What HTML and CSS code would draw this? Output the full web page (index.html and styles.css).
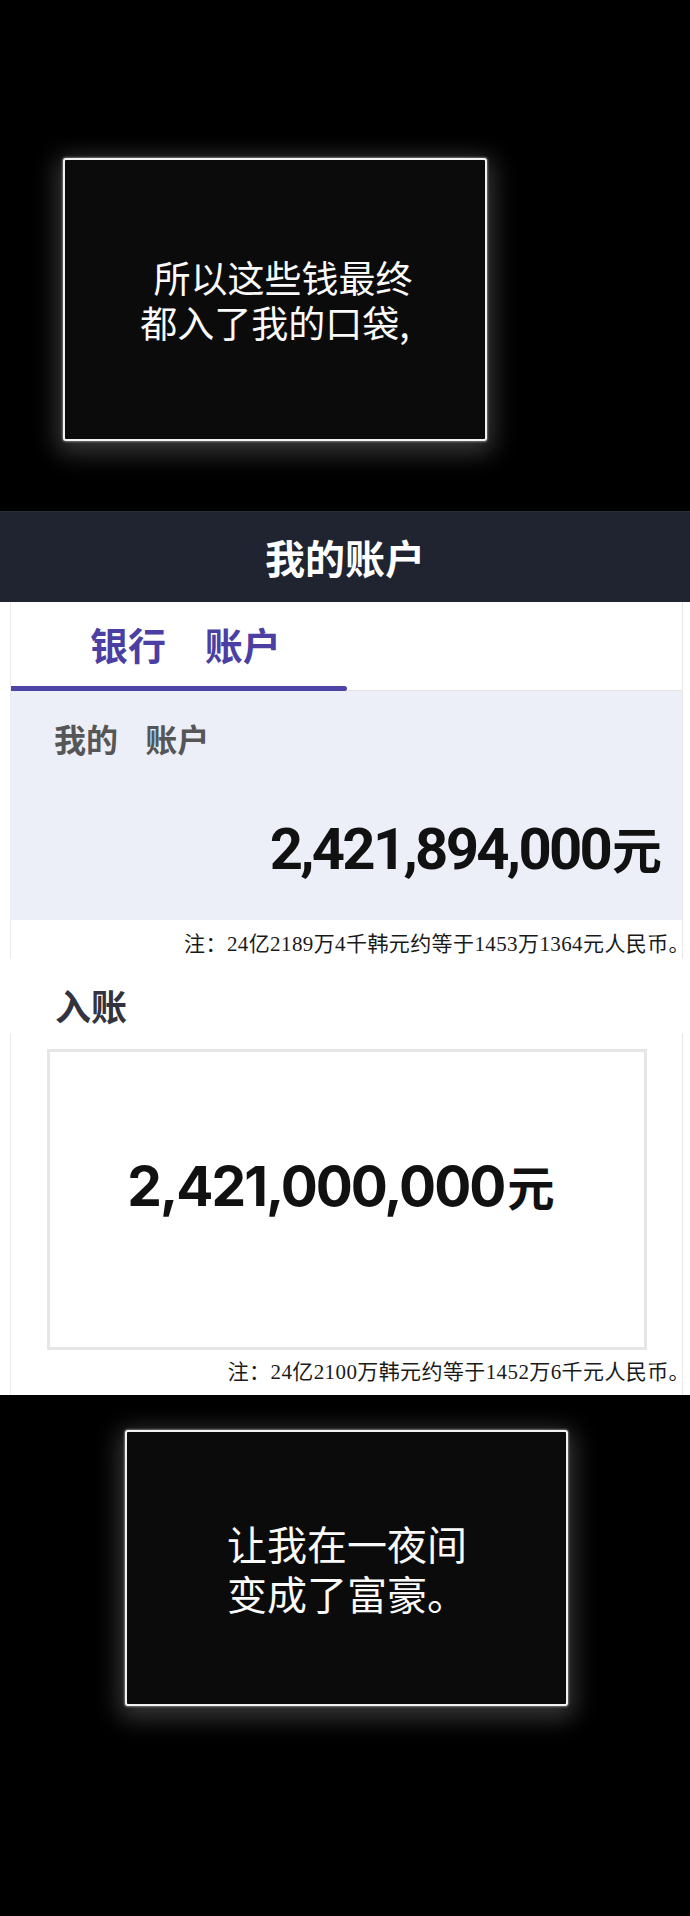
FILE: index.html
```html
<!DOCTYPE html>
<html lang="zh-CN">
<head>
<meta charset="utf-8">
<title>我的账户</title>
<link rel="stylesheet" href="styles.css">
</head>
<body>
  <section class="scene scene-top">
    <div class="caption caption-first">
      <p class="caption-text">所以这些钱最终<br>都入了我的口袋,</p>
    </div>
  </section>

  <main class="bank">
    <header class="bank-bar">
      <h1 class="bank-title">我的账户</h1>
    </header>

    <div class="sheet sheet-account">
      <nav class="tabs">
        <span class="tab active">银行 账户</span>
      </nav>
      <div class="balance">
        <div class="balance-label">我的 账户</div>
        <div class="balance-amount">2,421,894,000<span class="unit">元</span></div>
      </div>
      <p class="note">注：24亿2189万4千韩元约等于1453万1364元人民币。</p>
    </div>

    <h2 class="section-title">入账</h2>

    <div class="sheet sheet-deposit">
      <div class="deposit-box">
        <div class="deposit-amount">2,421,000,000<span class="unit">元</span></div>
      </div>
      <p class="note">注：24亿2100万韩元约等于1452万6千元人民币。</p>
    </div>
  </main>

  <section class="scene scene-bottom">
    <div class="caption caption-second">
      <p class="caption-text">让我在一夜间<br>变成了富豪。</p>
    </div>
  </section>
</body>
</html>
```

FILE: styles.css
```css
* {
  box-sizing: border-box;
}

html,
body {
  margin: 0;
  padding: 0;
  background: #000;
}

body {
  width: 690px;
  font-family: "Noto Sans CJK SC", "Noto Sans", sans-serif;
}

p {
  margin: 0;
}

/* ---------- black narration panels ---------- */

.scene {
  background: #000;
}

.scene-top {
  height: 511px;
  padding: 158px 0 0 63px;
}

.scene-bottom {
  height: 521px;
  padding: 35px 0 0 125px;
}

.caption {
  display: flex;
  flex-direction: column;
  justify-content: center;
  align-items: center;
  background: #0b0b0b;
  border: 2px solid #f2f2f2;
  border-radius: 3px;
  color: #fafafa;
  font-family: "Noto Sans CJK SC", sans-serif;
  font-weight: 400;
  box-shadow: 0 0 2px 1px rgba(255, 255, 255, 0.35),
              0 6px 24px 6px rgba(200, 200, 200, 0.28);
}

.caption-first {
  width: 424px;
  height: 283px;
  font-size: 37px;
  line-height: 45px;
}

.caption-first .caption-text {
  width: 100%;
  text-align: center;
  text-indent: 16px;
}

.caption-second {
  width: 443px;
  height: 276px;
  font-size: 40px;
  line-height: 50px;
  align-items: flex-start;
  padding-left: 100px;
}

/* ---------- banking app ---------- */

.bank {
  background: #fff;
}

.bank-bar {
  height: 91px;
  background: #1f2430;
  border-top: 1px solid #2a303c;
}

.bank-title {
  margin: 0;
  text-align: center;
  color: #fff;
  font-size: 40px;
  font-weight: 700;
  line-height: 90px;
}

.sheet {
  margin: 0 7px 0 10px;
  border-left: 1px solid #ebebeb;
  border-right: 1px solid #e6e6e6;
}

.tabs {
  height: 89px;
  border-bottom: 1px solid #e4e4e6;
  display: flex;
}

.tab {
  position: relative;
  width: 336px;
  height: 88px;
  padding-left: 79px;
  font-size: 38px;
  font-weight: 700;
  line-height: 84px;
  color: #4b3fa3;
  word-spacing: 30px;
}

.tab.active::after {
  content: "";
  position: absolute;
  left: 0;
  right: 0;
  bottom: -1px;
  height: 5px;
  border-radius: 0 3px 3px 0;
  background: #4d45a6;
}

.balance {
  background: #eceef8;
  height: 229px;
  padding: 27px 20px 0 43px;
}

.balance-label {
  font-size: 32px;
  font-weight: 700;
  line-height: 40px;
  color: #565656;
  word-spacing: 20px;
}

.balance-amount {
  margin-top: 54px;
  text-align: right;
  font-family: Roboto, "Noto Sans CJK SC", sans-serif;
  font-size: 58px;
  font-weight: 700;
  line-height: 70px;
  color: #111;
  letter-spacing: -2.7px;
}

.unit {
  font-family: "Noto Sans CJK SC", sans-serif;
  font-size: 0.86em;
  letter-spacing: 0;
}

.balance-amount .unit {
  margin-left: 2px;
}

.note {
  margin: 9px -8px 0 0;
  text-align: right;
  font-family: "Liberation Serif", "Noto Sans CJK SC", serif;
  font-size: 21px;
  line-height: 30px;
  color: #1a1a1a;
  letter-spacing: 0.4px;
}

.section-title {
  margin: 24px 0 0;
  padding-left: 55px;
  font-size: 36px;
  font-weight: 700;
  line-height: 44px;
  color: #32333f;
}

.sheet-deposit {
  margin-top: 6px;
  padding-top: 16px;
  padding-bottom: 8px;
}

.deposit-box {
  margin-left: 36px;
  width: 600px;
  height: 301px;
  border: 3px solid #e6e6e6;
  display: flex;
  align-items: center;
  justify-content: center;
  padding: 0 12px 28px 0;
}

.deposit-amount {
  font-family: Inter, "Noto Sans CJK SC", sans-serif;
  font-size: 55px;
  font-weight: 700;
  line-height: 70px;
  color: #111;
  letter-spacing: -2px;
}

.deposit-amount .unit {
  margin-left: 3px;
}

.sheet-deposit .note {
  margin-top: 7px;
}
```
